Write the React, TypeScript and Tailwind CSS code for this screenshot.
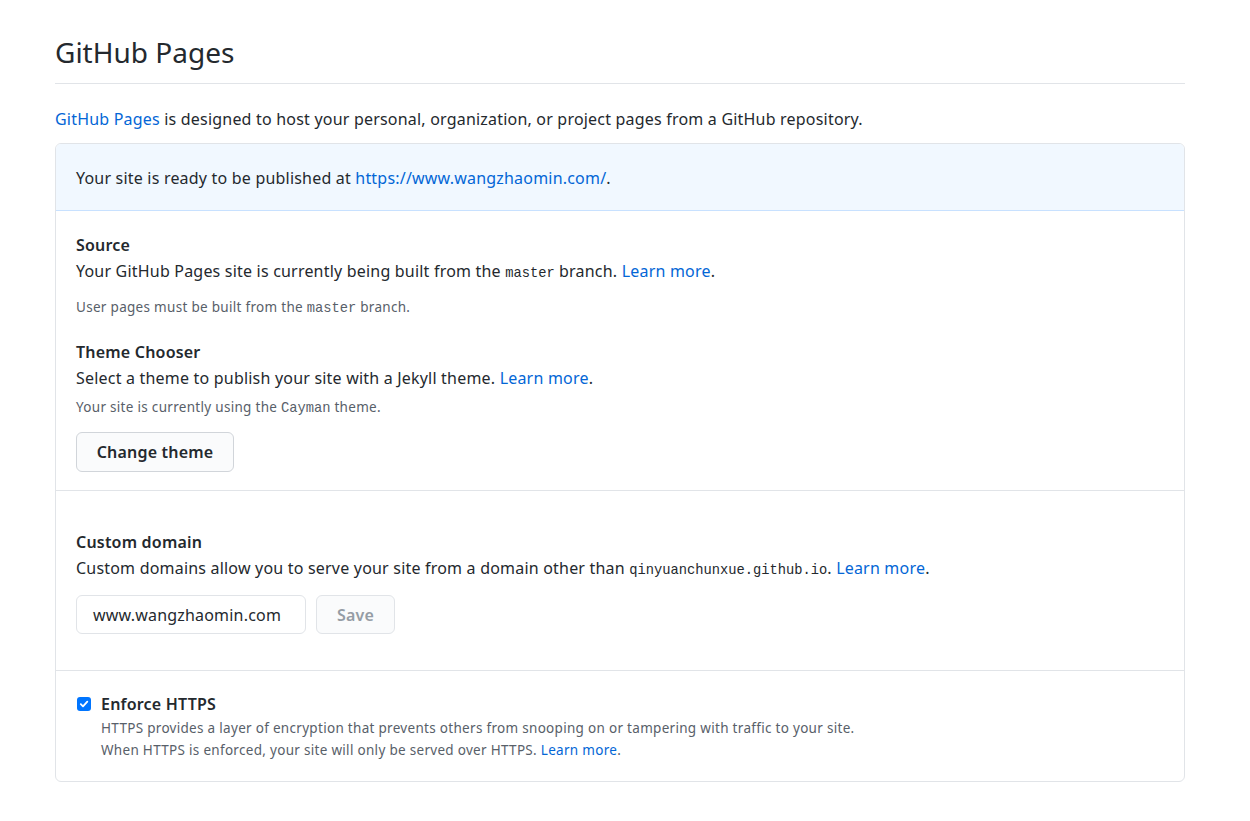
export default function App() {
  const mono = "font-['Liberation_Mono',monospace] text-[13.75px] leading-none tracking-normal";
  const note = "text-[13.5px] leading-[20px] tracking-[0.3px] text-[#586069]";
  return (
    <div className="min-h-screen bg-white pl-[55px] pt-[34px] font-['Noto_Sans',sans-serif] text-[16px] leading-[24px] tracking-[0.2px] text-[#24292e]">
      <div className="w-[1130px]">
        {/* Header */}
        <div className="border-b border-[#e1e4e8] pb-[13px]">
          <h1 className="text-[28px] leading-[36px] font-normal tracking-normal">GitHub Pages</h1>
        </div>

        <p className="mt-[23px]">
          <a className="text-[#0366d6]">GitHub Pages</a> is designed to host your personal, organization, or project pages from a GitHub repository.
        </p>

        {/* Settings box */}
        <div className="mt-[12px] rounded-[6px] border border-[#e1e4e8] overflow-hidden">
          <div className="bg-[#f1f8ff] border-b border-[#c8e1ff] px-[20px] pt-[22px] pb-[20px]">
            Your site is ready to be published at <a className="text-[#0366d6]">https://www.wangzhaomin.com/</a>.
          </div>

          {/* Source + theme */}
          <div className="px-[20px] pt-[22px] pb-[18px] border-b border-[#e1e4e8]">
            <h3 className="font-semibold">Source</h3>
            <p className="mt-[2px]">
              Your GitHub Pages site is currently being built from the <code className={mono}>master</code> branch. <a className="text-[#0366d6]">Learn more</a>.
            </p>
            <p className={`mt-[14px] ${note}`}>
              User pages must be built from the <code className={mono}>master</code> branch.
            </p>

            <h3 className="mt-[23px] font-semibold">Theme Chooser</h3>
            <p className="mt-[2px]">
              Select a theme to publish your site with a Jekyll theme. <a className="text-[#0366d6]">Learn more</a>.
            </p>
            <p className={`mt-[7px] ${note}`}>
              Your site is currently using the <code className={mono}>Cayman</code> theme.
            </p>
            <button className="mt-[15px] h-[40px] w-[158px] rounded-[6px] border border-[#d1d5da] bg-[#fafbfc] font-semibold text-[#24292e]">
              Change theme
            </button>
          </div>

          {/* Custom domain */}
          <div className="px-[20px] pt-[39px] pb-[36px] border-b border-[#e1e4e8]">
            <h3 className="font-semibold">Custom domain</h3>
            <p className="mt-[2px]">
              Custom domains allow you to serve your site from a domain other than <code className={mono}>qinyuanchunxue.github.io</code>. <a className="text-[#0366d6]">Learn more</a>.
            </p>
            <div className="mt-[15px] flex gap-[10px]">
              <div className="h-[39px] w-[230px] rounded-[6px] border border-[#e1e4e8] px-[16px] flex items-center">
                www.wangzhaomin.com
              </div>
              <button className="h-[39px] w-[79px] rounded-[6px] border border-[#e1e4e8] bg-[#fafbfc] font-semibold text-[#959da5]">
                Save
              </button>
            </div>
          </div>

          {/* HTTPS */}
          <div className="px-[20px] pt-[21px] pb-[20px]">
            <div className="flex items-start">
              <div className="mt-[5px] ml-[1px] h-[14px] w-[14px] rounded-[3px] bg-[#0075ff] flex items-center justify-center">
                <svg width="10" height="10" viewBox="0 0 10 10" fill="none">
                  <path d="M1.8 5.2 L4 7.3 L8.3 2.6" stroke="white" strokeWidth="1.8" strokeLinecap="round" strokeLinejoin="round" />
                </svg>
              </div>
              <div className="ml-[10px]">
                <div className="font-semibold">Enforce HTTPS</div>
                <p className="mt-[1px] text-[13.5px] leading-[22px] tracking-[0.3px] text-[#586069]">
                  HTTPS provides a layer of encryption that prevents others from snooping on or tampering with traffic to your site.
                  <br />
                  When HTTPS is enforced, your site will only be served over HTTPS. <a className="text-[#0366d6]">Learn more</a>.
                </p>
              </div>
            </div>
          </div>
        </div>
      </div>
    </div>
  );
}
